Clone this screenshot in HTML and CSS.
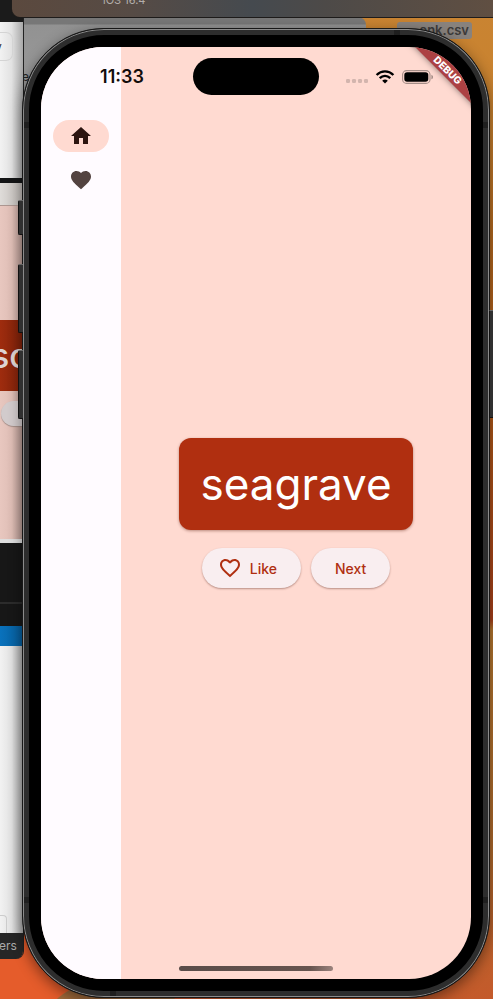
FILE: index.html
```html
<!DOCTYPE html>
<html lang="en">
<head>
<meta charset="utf-8">
<meta name="viewport" content="width=device-width, initial-scale=1">
<title>Simulator</title>
<link rel="stylesheet" href="styles.css">
</head>
<body>
<div class="desktop" aria-hidden="true">
  <div class="back-window">e</div>
  <div class="file-label">onk.csv</div>
  <div class="editor">
    <div class="ed-top"></div>
    <div class="ed-page"><span class="ed-field">y</span></div>
    <div class="ed-line"></div>
    <div class="ed-toolbar"></div>
    <div class="ed-pink"></div>
    <div class="ed-card">sc</div>
    <div class="ed-pink ed-pink-tall"><div class="ed-pill"></div></div>
    <div class="ed-edge"></div>
    <div class="ed-dark"></div>
    <div class="ed-blue"></div>
    <div class="ed-page ed-page-low"><span class="ed-box"></span></div>
    <div class="ed-footer">ers</div>
  </div>
</div>
<header class="titlebar">iOS 16.4</header>
<div class="phone">
  <i class="key key-mute"></i><i class="key key-up"></i><i class="key key-down"></i><i class="key key-power"></i>
  <i class="seam seam-l seam-upper"></i><i class="seam seam-r seam-upper"></i>
  <i class="seam seam-l seam-lower"></i><i class="seam seam-r seam-lower"></i>
  <i class="seam seam-top"></i><i class="seam seam-bottom"></i>
  <div class="screen">
    <nav class="rail">
      <button class="dest selected" aria-label="Home">
        <svg viewBox="0 0 24 24"><path d="M10 20v-6h4v6h5v-8h3L12 3 2 12h3v8z"/></svg>
      </button>
      <button class="dest" aria-label="Favorites">
        <svg viewBox="0 0 24 24"><path d="M12 21.35l-1.45-1.32C5.4 15.36 2 12.28 2 8.5 2 5.42 4.42 3 7.5 3c1.74 0 3.41.81 4.5 2.09C13.09 3.81 14.76 3 16.5 3 19.58 3 22 5.42 22 8.5c0 3.78-3.4 6.86-8.55 11.54L12 21.35z"/></svg>
      </button>
    </nav>
    <main class="content">
      <div class="card">seagrave</div>
      <div class="actions">
        <button class="btn btn-icon">
          <svg viewBox="0 0 24 24"><path d="M16.5 3c-1.74 0-3.41.81-4.5 2.09C10.91 3.81 9.24 3 7.5 3 4.42 3 2 5.42 2 8.5c0 3.78 3.4 6.86 8.55 11.54L12 21.35l1.45-1.32C18.6 15.36 22 12.28 22 8.5 22 5.42 19.58 3 16.5 3zm-4.4 15.55l-.1.1-.1-.1C7.14 14.24 4 11.39 4 8.5 4 6.5 5.5 5 7.5 5c1.54 0 3.04.99 3.57 2.36h1.87C13.46 5.99 14.96 5 16.5 5c2 0 3.5 1.5 3.5 3.5 0 2.89-3.14 5.74-7.9 10.05z"/></svg>
          Like
        </button>
        <button class="btn">Next</button>
      </div>
    </main>
    <div class="statusbar">
      <div class="status-side"><time class="time">11:33</time></div>
      <div class="island"></div>
      <div class="status-side">
        <div class="signals">
          <svg width="22" height="14" viewBox="0 0 22 14"><g fill="#d3b5ae"><rect y="9" width="4" height="4" rx="1.3"/><rect x="6" y="9" width="4" height="4" rx="1.3"/><rect x="12" y="9" width="4" height="4" rx="1.3"/><rect x="18" y="9" width="4" height="4" rx="1.3"/></g></svg>
          <svg width="20" height="14" viewBox="0 0 20 14"><path d="M1.6 5C6.5.2 13.5.2 18.4 5M4.7 8.2c3.2-3 7.4-3 10.6 0" fill="none" stroke="#000" stroke-width="2.4"/><path d="M7.2 10.7c1.8-1.6 3.8-1.6 5.6 0L10 13.6z"/></svg>
          <svg width="32" height="14" viewBox="0 0 32 14"><rect x=".6" y=".6" width="27.4" height="12.8" rx="4" fill="none" stroke="#a58d87" stroke-width="1.1"/><rect x="2.3" y="2.2" width="24" height="9.6" rx="2.8"/><path d="M29.4 4.7c2.2.8 2.2 3.8 0 4.6z" fill="#a58d87"/></svg>
        </div>
      </div>
    </div>
    <div class="debug">DEBUG</div>
    <div class="home-bar"></div>
  </div>
</div>
</body>
</html>
```
FILE: styles.css
```css
* { box-sizing: border-box; }

body {
  margin: 0;
  min-height: 100vh;
  display: flex;
  flex-direction: column;
  position: relative;
  overflow: hidden;
  font-family: Inter, "Liberation Sans", sans-serif;
}

/* Desktop behind the device */
.desktop {
  position: absolute;
  inset: 0;
  z-index: -1;
  overflow: hidden;
  background:
    radial-gradient(circle at 116px 1070px, #a06a3a 92px, transparent 93px),
    linear-gradient(90deg, #e55c2b 0 30%, transparent 60%),
    linear-gradient(180deg, #c98432 0, #c9822f 12%, #b5691f 24%, #b05a18 40%, #a8401a 62%, #b5772f 63%, #b06a2c 85%, #c45a2b 100%);
}

.back-window {
  position: absolute;
  left: 22px;
  top: 17px;
  width: 344px;
  height: 160px;
  padding-top: 52px;
  border-radius: 0 8px 0 0;
  background: linear-gradient(180deg, #777 0 7px, #929292 8px, #989898 60px);
  color: #222;
  font-size: 12px;
}

.file-label {
  position: absolute;
  left: 397px;
  top: 22px;
  width: 75px;
  height: 17px;
  padding-right: 3px;
  border-radius: 3px;
  background: #88827d;
  color: #3c3a39;
  font-size: 13px;
  font-weight: 600;
  line-height: 17px;
  text-align: right;
}

.editor {
  position: absolute;
  left: 0;
  top: 0;
  width: 24px;
  border-right: 1px solid #222;
  border-radius: 0 0 8px 0;
  overflow: hidden;
}

.ed-top { height: 22px; background: #1b1b1b; }
.ed-page {
  height: 156px;
  padding-top: 10px;
  background: linear-gradient(90deg, #f2f2f2, #e2e2e2 50%, #a8a8a8);
  font-size: 12px;
  color: #333;
}
.ed-field {
  display: block;
  width: 13px;
  height: 29px;
  border: 1px solid #d4d4d4;
  border-left: 0;
  border-radius: 0 7px 7px 0;
  line-height: 27px;
  text-indent: -5px;
}
.ed-line { height: 5px; background: #141516; }
.ed-toolbar { height: 22px; background: linear-gradient(90deg, #dfdcd9, #bcb7b3); }
.ed-pink { height: 115px; border-top: 1px solid #ac9690; background: linear-gradient(90deg, #e8c7bf, #dfbeb6 50%, #b39790); }
.ed-card {
  height: 71px;
  background: linear-gradient(90deg, #9f2c0e, #7c210a);
  color: #ddd4d2;
  font-size: 34px;
  font-weight: 500;
  line-height: 71px;
  text-indent: -9px;
}
.ed-pink-tall { height: 148px; padding-top: 10px; border-top: 0; }
.ed-pill { width: 50px; height: 25px; margin-left: 1px; border-radius: 13px; background: #d2cbcc; box-shadow: 0 1px 1px #a48e88; }
.ed-edge { height: 4px; background: #dedede; }
.ed-dark { height: 83px; background: linear-gradient(#171717 59px, #2c2c2c 59px 61px, #171717 61px); }
.ed-blue { height: 20px; background: linear-gradient(90deg, #0972bd, #075c99); }
.ed-page-low { height: 287px; padding-top: 269px; }
.ed-box { display: block; width: 7px; height: 18px; border: 1px solid #ccc; border-left: 0; border-bottom: 0; border-radius: 0 4px 0 0; }
.ed-footer {
  height: 26px;
  background: #262626;
  color: #aaa;
  font-size: 12px;
  line-height: 26px;
  text-indent: -1px;
}

/* Simulator title bar */
.titlebar {
  height: 18px;
  margin-left: 11px;
  padding-left: 91px;
  border: 1px solid #1e1c1b;
  border-top: 0;
  border-right: 0;
  border-radius: 0 0 0 9px;
  background: linear-gradient(90deg, #5b493e, #564b45 25%, #454a4f 50%, #4d4a48 65%, #604f42);
  color: #b3aeab;
  font-size: 11px;
  line-height: 0;
}

/* Device */
.phone {
  position: relative;
  flex: 1;
  display: flex;
  margin: 10px 3px 1px 22px;
  padding: 18px;
  border: 1px solid #171717;
  border-radius: 82px;
  background: #000;
  box-shadow: inset 0 0 0 1px #8b8b8b, inset 0 0 0 6px #2d2d2d, 0 4px 14px rgba(0, 0, 0, .45);
}

.key {
  position: absolute;
  left: -5px;
  width: 5px;
  border: 1px solid #111;
  border-top-color: #666;
  border-right: 0;
  border-radius: 2px 0 0 2px;
  background: #303030;
}
.key-mute { top: 171px; height: 35px; }
.key-up { top: 235px; height: 69px; }
.key-down { top: 321px; height: 69px; }
.key-power { top: 281px; left: auto; right: -5px; height: 108px; border-radius: 0; }

.seam { position: absolute; background: #1f1f1f; }
.seam-l, .seam-r { width: 5px; height: 6px; }
.seam-l { left: 1px; }
.seam-r { right: 1px; }
.seam-upper { top: 93px; }
.seam-lower { bottom: 94px; }
.seam-top, .seam-bottom { width: 6px; height: 5px; }
.seam-top { top: 1px; right: 89px; }
.seam-bottom { bottom: 1px; left: 87px; }

.screen {
  position: relative;
  flex: 1;
  display: flex;
  overflow: hidden;
  border-radius: 62px;
  background: #ffdad1;
}

.rail {
  width: 80px;
  padding-top: 73px;
  display: flex;
  flex-direction: column;
  align-items: center;
  gap: 12px;
  background: #fffbff;
}
.dest {
  display: flex;
  align-items: center;
  justify-content: center;
  width: 56px;
  height: 32px;
  padding: 0;
  border: 0;
  border-radius: 16px;
  background: transparent;
  fill: #534340;
}
.dest svg { width: 24px; height: 24px; }
.selected { background: #ffdad1; fill: #2c1510; }

.content {
  flex: 1;
  display: flex;
  flex-direction: column;
  align-items: center;
  justify-content: center;
  gap: 18px;
}
.card {
  padding: 20px 21px;
  border-radius: 12px;
  background: #b02f10;
  box-shadow: 0 1px 3px rgba(80, 20, 0, .4);
  color: #fff;
  font-size: 44px;
  line-height: 52px;
}
.actions { display: flex; gap: 10px; }
.btn {
  display: flex;
  align-items: center;
  gap: 8px;
  height: 40px;
  padding: 0 24px;
  border: 0;
  border-radius: 20px;
  background: #f9eef0;
  box-shadow: 0 1px 2px rgba(80, 30, 20, .4);
  color: #b02f10;
  fill: #b02f10;
  font: 500 14px Inter, sans-serif;
}
.btn-icon { padding-left: 16px; }
.btn svg { width: 24px; height: 24px; }

/* Status bar */
.statusbar {
  position: absolute;
  inset: 11px 0 auto;
  display: flex;
  align-items: center;
}
.status-side { flex: 1; display: flex; justify-content: center; }
.time { padding-left: 10px; font-size: 18px; font-weight: 600; color: #120c0b; }
.island { width: 126px; height: 37px; border-radius: 19px; background: #000; }
.signals { display: flex; gap: 7px; padding-right: 10px; }

.debug {
  position: absolute;
  top: 16px;
  right: -37px;
  width: 120px;
  height: 14px;
  background: #ac4143;
  box-shadow: 0 0 6px rgba(0, 0, 0, .5);
  color: #fff;
  font-size: 10px;
  font-weight: 800;
  line-height: 14px;
  text-align: center;
  transform: rotate(45deg);
}

.home-bar {
  position: absolute;
  left: 50%;
  bottom: 8px;
  width: 154px;
  height: 5px;
  margin-left: -77px;
  border-radius: 3px;
  background: linear-gradient(90deg, #5a4c49, #67544f 85%, #9b837d);
}
```
